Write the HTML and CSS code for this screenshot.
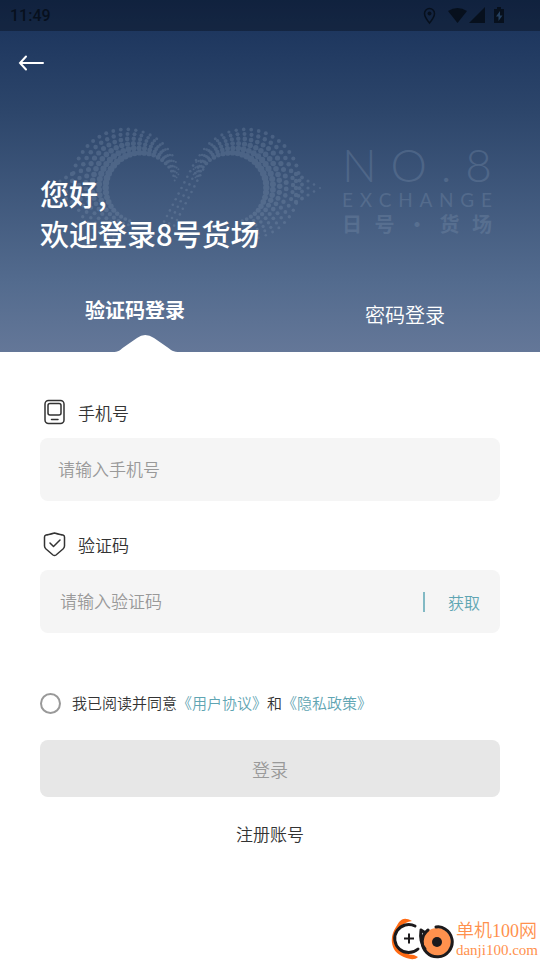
FILE: index.html
```html
<!DOCTYPE html>
<html lang="zh-CN">
  <head>
    <meta charset="UTF-8" />
    <meta name="viewport" content="width=device-width, initial-scale=1.0" />
    <title>8号货场 - 登录</title>
    <link rel="stylesheet" href="styles.css" />
  </head>
  <body>
    <header class="hero">
      <div class="brand" aria-hidden="true">
        <svg class="brand-mark" viewBox="0 0 280 126" width="280" height="126"></svg>
        <div class="brand-text">
          <div class="brand-name"><span>N</span><span>O</span><span>.</span><span>8</span></div>
          <div class="brand-sub">
            <span>E</span><span>X</span><span>C</span><span>H</span><span>A</span><span>N</span><span>G</span><span>E</span>
          </div>
          <div class="brand-cn"><span>日</span><span>号</span><span>·</span><span>货</span><span>场</span></div>
        </div>
      </div>

      <div class="status-bar">
        <span>11:49</span>
        <svg class="status-icons" viewBox="0 0 84 20" width="84" height="20">
          <path d="M9.500 2.500a5 5 0 0 0-5 5c0 3.500 5 9.500 5 9.500s5-6 5-9.500a5 5 0 0 0-5-5z" fill="none" stroke="currentColor" stroke-width="1.500" />
          <circle cx="9.500" cy="7.500" r="2" />
          <path d="M28 5q9.500-6 19 0l-9.500 12z" />
          <path d="M65 1v16H49z" />
          <path d="M77 1h4v2h3v14H74V3h3z" />
          <path class="bolt" d="M80 5l-4 5.500h2.500V15l4-5.500H80z" />
        </svg>
      </div>

      <button class="back" type="button" aria-label="返回">
        <svg viewBox="0 0 26 16" width="26" height="16">
          <path d="M8 1.500L2 8l6 6.500M2 8h23" />
        </svg>
      </button>

      <h1 class="welcome">您好,<br />欢迎登录8号货场</h1>

      <nav class="tabs">
        <button class="tab active" type="button">
          验证码登录
          <svg class="tab-bump" viewBox="0 0 68 17" width="68" height="17">
            <path d="M0 17c7 0 8-2 12-5L25 3q8-6 17 0l13 9c4 3 6 5 13 5z" />
          </svg>
        </button>
        <button class="tab" type="button">密码登录</button>
      </nav>
    </header>

    <form class="login">
      <div class="field">
        <label for="phone">
          <svg viewBox="0 0 24 26" width="24" height="26">
            <rect x="3" y="1.500" width="19" height="23" rx="3.500" />
            <rect x="6" y="4.500" width="13" height="11.500" rx="2" />
            <path d="M9.500 20.500H16" />
          </svg>
          手机号
        </label>
        <div class="input-box">
          <input id="phone" type="tel" placeholder="请输入手机号" />
        </div>
      </div>

      <div class="field">
        <label for="code">
          <svg viewBox="0 0 24 26" width="24" height="26">
            <path d="M12.500 2C9 3 5.500 4 4 4q-1.500.3-1.500 2v9c0 1.500.5 2 1.500 3l7 6q1.500 1 3 0l7-6c1-1 1.500-1.500 1.500-3V6q0-1.700-1.500-2C19.500 4 16 3 12.500 2z" />
            <path d="M8 12l3.500 3.500L18 9" />
          </svg>
          验证码
        </label>
        <div class="input-box code-box">
          <input id="code" type="text" placeholder="请输入验证码" />
          <button class="get-code" type="button">获取</button>
        </div>
      </div>

      <div class="agreement">
        <input id="agree" type="checkbox" />
        <label for="agree">我已阅读并同意<a href="#">《用户协议》</a>和<a href="#">《隐私政策》</a></label>
      </div>

      <button class="submit" type="submit">登录</button>
      <a class="register" href="#">注册账号</a>
    </form>

    <footer class="site">
      <svg viewBox="0 0 64 42" width="64" height="42">
        <path d="M22 3C12-3 9 4 6 9c-7 10-5 23 4 28 7 4 14 6 18 2l-4-2C7 36-1 21 10 9q5-5 12-6z" fill="#ff6b14" />
        <circle cx="47" cy="24" r="14" fill="#ff914d" />
        <path d="M25 8A14 14 0 1 0 28 31" class="ring" />
        <path d="M31 12c-1 7 0 14 4 19M31 12l3 2" class="ring" />
        <path d="M46 9q5-1 9 2a15 15 0 1 1-17 1" class="ring" />
        <path d="M14 20.500h10M19 15.500v10" stroke="#1c1a1c" stroke-width="2" />
        <circle cx="47" cy="24" r="5" fill="#1c1a1c" />
      </svg>
      <div class="site-text">
        <div class="site-name">单机100网</div>
        <div class="site-url">danji100.com</div>
      </div>
    </footer>

    <script src="script.js"></script>
  </body>
</html>
```

FILE: styles.css
```css
* {
  box-sizing: border-box;
}

body {
  margin: 0;
  min-height: 100vh;
  display: flex;
  flex-direction: column;
  background: #fff;
  color: #333;
  font-family: "Noto Sans CJK SC", sans-serif;
  font-size: 17px;
  font-weight: 350;
}

button,
input {
  font: inherit;
  color: inherit;
  border: 0;
  padding: 0;
  background: none;
}

button {
  cursor: pointer;
}

a {
  color: #5fa5b3;
  text-decoration: none;
}

svg {
  display: block;
  flex: none;
}

/* header */

.hero {
  position: relative;
  color: #fff;
  background: linear-gradient(#18315a, #2d466b 32%, #536b8e 80%, #647798);
}

.status-bar {
  position: relative;
  display: flex;
  align-items: center;
  justify-content: space-between;
  height: 31px;
  padding: 0 36px 0 10px;
  background: rgba(0, 0, 0, 0.3);
  color: #07101d;
  font: 500 16px Roboto, sans-serif;
}

.status-icons {
  fill: currentColor;
}

.status-icons .bolt {
  fill: #25405f;
}

.back {
  position: relative;
  display: block;
  padding: 24px 18px;
}

.back path {
  fill: none;
  stroke: #fff;
  stroke-width: 2;
  stroke-linecap: round;
}

.welcome {
  position: relative;
  margin: 0;
  padding: 78px 40px 0;
  font-size: 29px;
  font-weight: 500;
  line-height: 40px;
}

.tabs {
  position: relative;
  display: grid;
  grid-template-columns: 1fr 1fr;
  height: 99px;
}

.tab {
  position: relative;
  padding-top: 24px;
  font-size: 20px;
}

.tab.active {
  padding-top: 14px;
  font-weight: 700;
}

.tab-bump {
  position: absolute;
  left: calc(50% - 23px);
  bottom: 0;
  fill: #fff;
}

/* faded brand artwork behind the title */

.brand {
  position: absolute;
  top: 126px;
  left: 46px;
  right: 48px;
  display: flex;
  justify-content: space-between;
  color: #8a9fb9;
  opacity: 0.26;
}

.brand-mark {
  fill: currentColor;
}

.brand-text {
  width: 150px;
  padding-top: 15px;
}

.brand-text div {
  display: flex;
  justify-content: space-between;
}

.brand-name {
  font: 300 46px/48px Lato, sans-serif;
}

.brand-sub {
  font: 400 19px/22px Lato, sans-serif;
}

.brand-cn {
  font-size: 20px;
  font-weight: 700;
  line-height: 26px;
}

/* form */

.login {
  display: flex;
  flex-direction: column;
  padding: 43px 40px 24px;
}

.field {
  margin-bottom: 26px;
}

.field label {
  display: flex;
  align-items: center;
  gap: 12px;
  height: 34px;
  margin: 0 2px 9px;
}

.field label svg {
  fill: none;
  stroke: #333;
  stroke-width: 1.5;
  stroke-linecap: round;
  stroke-linejoin: round;
}

.input-box {
  display: flex;
  align-items: center;
  height: 63px;
  padding: 0 20px 0 18px;
  border-radius: 8px;
  background: #f5f5f5;
}

.code-box {
  padding-left: 20px;
}

.input-box input {
  flex: 1;
  min-width: 0;
  padding-bottom: 3px;
  outline: none;
}

.input-box input::placeholder {
  color: #999;
  opacity: 1;
}

.get-code {
  padding-left: 23px;
  border-left: 2px solid #82b9c4;
  color: #5fa5b3;
  font-size: 16px;
  line-height: 20px;
}

.agreement {
  display: flex;
  align-items: center;
  gap: 11px;
  margin: 32px 0 25px;
  font-size: 15px;
  line-height: 24px;
}

.agreement input {
  appearance: none;
  width: 21px;
  height: 21px;
  margin: 0;
  border: 2px solid #999;
  border-radius: 50%;
}

.agreement input:checked {
  background: #5fa5b3;
}

.submit {
  height: 57px;
  border-radius: 8px;
  background: #e7e7e7;
  color: #999;
  font-size: 18px;
}

.register {
  align-self: center;
  margin-top: 24px;
  color: #333;
  line-height: 26px;
}

/* site badge */

.site {
  display: flex;
  align-items: center;
  gap: 2px;
  margin: auto 2px 0 auto;
  color: #ff914d;
  font-family: "Liberation Serif", "Noto Sans CJK SC", serif;
}

.site .ring {
  fill: none;
  stroke: #1c1a1c;
  stroke-width: 3;
  stroke-linecap: round;
}

.site-name {
  font-size: 18px;
  line-height: 22px;
}

.site-url {
  font-size: 15px;
  line-height: 16px;
}
```

FILE: script.js
```js
// halftone infinity mark: two crescents, the crossing arm and the outer tips
const mark = document.querySelector(".brand-mark");

function dot(x, y, r) {
  const c = document.createElementNS("http://www.w3.org/2000/svg", "circle");
  c.setAttribute("cx", x.toFixed(1));
  c.setAttribute("cy", y.toFixed(1));
  c.setAttribute("r", r.toFixed(1));
  mark.appendChild(c);
}

const rows = 6;
const step = 8;

function crescent(mirror) {
  for (let row = 0; row < rows; row++) {
    const t = (row + 0.5) / rows;
    for (let i = 0; i < 31; i++) {
      const deg = -12 - (i + (row % 2) / 2) * step;
      const a = (deg * Math.PI) / 180;
      const x = (96 + 33 * Math.cos(a)) * (1 - t) + (79 + 56 * Math.cos(a)) * t;
      const y = (62 + 33 * Math.sin(a)) * (1 - t) + (58 + 57 * Math.sin(a)) * t;
      // dots swell towards the upper outside of the ring and towards the hole
      const swell = Math.max(0, Math.cos(((deg + 145) * Math.PI) / 270));
      const r = 0.9 + (2.6 - 1.6 * t) * swell;
      dot(mirror ? 280 - x : x, y, r);
    }
  }
}

function arm() {
  for (let i = 0; i < 12; i++) {
    for (let j = 0; j < 3; j++) {
      dot(150 - i * 2.9 + j * 5, 34 + i * 5.6 + j * 2, 1.3);
    }
  }
}

function tip(x0, dir) {
  for (let i = 0; i < 5; i++) {
    const n = 5 - i;
    for (let j = 0; j < n; j++) {
      dot(x0 + dir * i * 6, 62 + (j - (n - 1) / 2) * 7, 2.2 - i * 0.3);
    }
  }
}

crescent(false);
crescent(true);
arm();
tip(250, 1);
tip(26, -1);
```
